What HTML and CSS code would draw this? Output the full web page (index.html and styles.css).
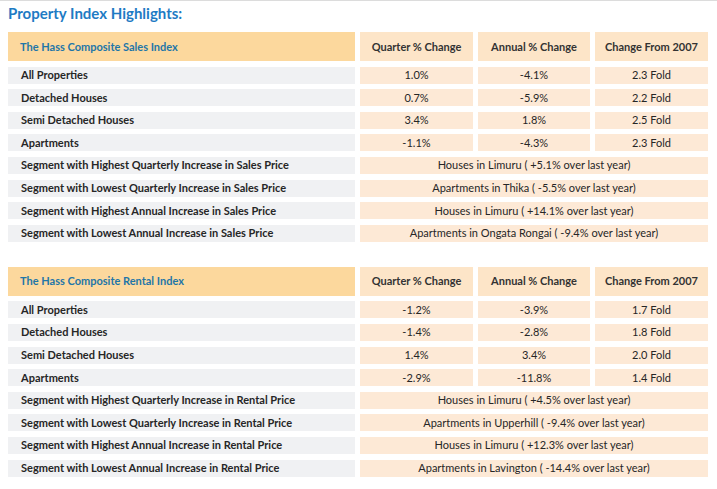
FILE: index.html
```html
<!DOCTYPE html>
<html>
<head>
<meta charset="utf-8">
<link rel="stylesheet" href="styles.css">
</head>
<body>
<div class="page">
  <h1 class="title">Property Index Highlights:</h1>

  <div class="grid sales">
    <div class="cell head-main">The Hass Composite Sales Index</div>
    <div class="cell head">Quarter % Change</div>
    <div class="cell head">Annual % Change</div>
    <div class="cell head">Change From 2007</div>

    <div class="cell label">All Properties</div>
    <div class="cell val">1.0%</div>
    <div class="cell val">-4.1%</div>
    <div class="cell val">2.3 Fold</div>

    <div class="cell label">Detached Houses</div>
    <div class="cell val">0.7%</div>
    <div class="cell val">-5.9%</div>
    <div class="cell val">2.2 Fold</div>

    <div class="cell label">Semi Detached Houses</div>
    <div class="cell val">3.4%</div>
    <div class="cell val">1.8%</div>
    <div class="cell val">2.5 Fold</div>

    <div class="cell label">Apartments</div>
    <div class="cell val">-1.1%</div>
    <div class="cell val">-4.3%</div>
    <div class="cell val">2.3 Fold</div>

    <div class="cell label">Segment with Highest Quarterly Increase in Sales Price</div>
    <div class="cell val span">Houses in Limuru ( +5.1% over last year)</div>

    <div class="cell label">Segment with Lowest Quarterly Increase in Sales Price</div>
    <div class="cell val span">Apartments in Thika ( -5.5% over last year)</div>

    <div class="cell label">Segment with Highest Annual Increase in Sales Price</div>
    <div class="cell val span">Houses in Limuru ( +14.1% over last year)</div>

    <div class="cell label">Segment with Lowest Annual Increase in Sales Price</div>
    <div class="cell val span">Apartments in Ongata Rongai ( -9.4% over last year)</div>
  </div>

  <div class="grid rental">
    <div class="cell head-main">The Hass Composite Rental Index</div>
    <div class="cell head">Quarter % Change</div>
    <div class="cell head">Annual % Change</div>
    <div class="cell head">Change From 2007</div>

    <div class="cell label">All Properties</div>
    <div class="cell val">-1.2%</div>
    <div class="cell val">-3.9%</div>
    <div class="cell val">1.7 Fold</div>

    <div class="cell label">Detached Houses</div>
    <div class="cell val">-1.4%</div>
    <div class="cell val">-2.8%</div>
    <div class="cell val">1.8 Fold</div>

    <div class="cell label">Semi Detached Houses</div>
    <div class="cell val">1.4%</div>
    <div class="cell val">3.4%</div>
    <div class="cell val">2.0 Fold</div>

    <div class="cell label">Apartments</div>
    <div class="cell val">-2.9%</div>
    <div class="cell val">-11.8%</div>
    <div class="cell val">1.4 Fold</div>

    <div class="cell label">Segment with Highest Quarterly Increase in Rental Price</div>
    <div class="cell val span">Houses in Limuru ( +4.5% over last year)</div>

    <div class="cell label">Segment with Lowest Quarterly Increase in Rental Price</div>
    <div class="cell val span">Apartments in Upperhill ( -9.4% over last year)</div>

    <div class="cell label">Segment with Highest Annual Increase in Rental Price</div>
    <div class="cell val span">Houses in Limuru ( +12.3% over last year)</div>

    <div class="cell label">Segment with Lowest Annual Increase in Rental Price</div>
    <div class="cell val span">Apartments in Lavington ( -14.4% over last year)</div>
  </div>
</div>
</body>
</html>
```

FILE: styles.css
```css
html, body {
  margin: 0;
  padding: 0;
  background: #ffffff;
}

body {
  border-top: 1px solid #dcdcdc;
  font-family: Lato, "Open Sans", "Liberation Sans", sans-serif;
  color: #262626;
}

.page {
  padding: 2px 8px 0 8px;
}

.title {
  margin: 0;
  font-size: 15px;
  line-height: 20px;
  font-weight: 700;
  color: #1e7bc4;
}

.grid {
  display: grid;
  grid-template-columns: 347px 113px 112px 113px;
  grid-template-rows: 29px repeat(8, 17px);
  column-gap: 5px;
  row-gap: 5.6px;
}

.sales {
  margin-top: 9px;
}

.rental {
  margin-top: 25px;
}

.cell {
  display: flex;
  align-items: center;
  font-size: 11px;
  line-height: 12px;
  white-space: nowrap;
}

.head-main {
  background: #fcd89d;
  color: #1f76a8;
  font-weight: 700;
  padding-left: 12px;
}

.head {
  background: #fde5c8;
  color: #333333;
  font-weight: 700;
  justify-content: center;
}

.label {
  background: #f0f1f3;
  color: #262626;
  font-weight: 700;
  padding-left: 13px;
}

.val {
  background: #fde9d6;
  color: #262626;
  justify-content: center;
}

.span {
  grid-column: 2 / 5;
}
```
